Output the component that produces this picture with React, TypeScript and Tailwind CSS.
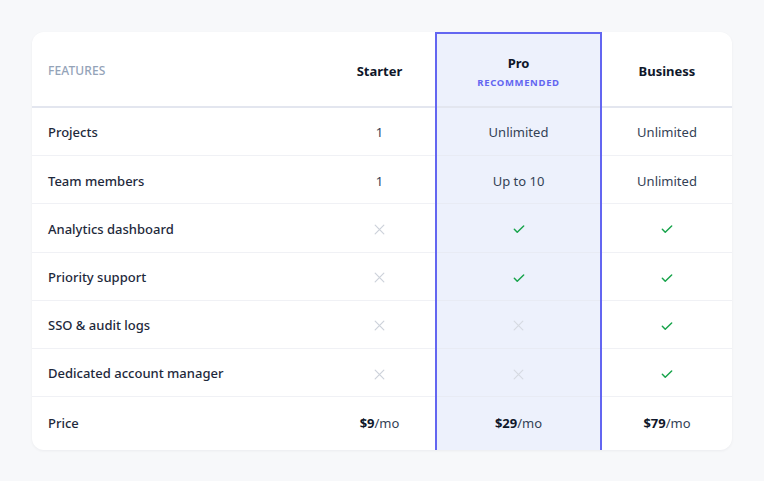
import React from "react";

const Check = () => (
  <svg width="14" height="14" viewBox="0 0 24 24" fill="none" stroke="#16a34a" strokeWidth="2.5" strokeLinecap="round" strokeLinejoin="round">
    <path d="M4 12.5l5 5L20 7" />
  </svg>
);

const Cross = ({ light = false }: { light?: boolean }) => (
  <svg width="13" height="13" viewBox="0 0 24 24" fill="none" stroke={light ? "#d6dae2" : "#cdd2da"} strokeWidth="2.2" strokeLinecap="round">
    <path d="M4 4l16 16M20 4L4 20" />
  </svg>
);

type Cell = React.ReactNode;

const features = [
  "Projects",
  "Team members",
  "Analytics dashboard",
  "Priority support",
  "SSO & audit logs",
  "Dedicated account manager",
];

const starter: Cell[] = ["1", "1", <Cross />, <Cross />, <Cross />, <Cross />];
const pro: Cell[] = ["Unlimited", "Up to 10", <Check />, <Check />, <Cross light />, <Cross light />];
const business: Cell[] = ["Unlimited", "Unlimited", <Check />, <Check />, <Check />, <Check />];

const Price = ({ v }: { v: string }) => (
  <span className="text-[13px] text-[#334155]">
    <span className="font-bold text-[#0f172a]">{v}</span>/mo
  </span>
);

function ValueColumn({ header, cells, price }: { header: React.ReactNode; cells: Cell[]; price: string }) {
  return (
    <div className="flex flex-col">
      <div className="h-[76px] pt-[5px] border-b-2 border-[#e3e6ef] flex items-center justify-center">{header}</div>
      {cells.map((c, i) => (
        <div key={i} className="h-[48.2px] pt-[3px] border-b border-[#f0f1f5] flex items-center justify-center text-[13px] text-[#334155]">
          {c}
        </div>
      ))}
      <div className="flex-1 flex items-center justify-center">
        <Price v={price} />
      </div>
    </div>
  );
}

export default function App() {
  return (
    <div className="min-h-[481px] w-full bg-[#f7f8fa] pt-[32px] pl-[32px]" style={{ fontFamily: "'Noto Sans', Inter, sans-serif" }}>
      <div className="w-[700px] h-[418px] bg-white rounded-xl overflow-hidden shadow-[0_1px_3px_rgba(15,23,42,0.05)] grid grid-cols-[292px_111px_167px_130px]">
        <div className="flex flex-col">
          <div className="h-[76px] pt-[3px] border-b-2 border-[#e3e6ef] flex items-center pl-4">
            <span className="text-[12px] font-medium uppercase tracking-[0.01em] text-[#94a3b8]">Features</span>
          </div>
          {features.map((f) => (
            <div key={f} className="h-[48.2px] pt-[3px] border-b border-[#f0f1f5] flex items-center pl-4 text-[13px] font-medium text-[#1e293b]">
              {f}
            </div>
          ))}
          <div className="flex-1 flex items-center pl-4 text-[13px] font-medium text-[#1e293b]">Price</div>
        </div>

        <ValueColumn
          header={<span className="text-[13px] font-bold text-[#0f172a]">Starter</span>}
          cells={starter}
          price="$9"
        />

        <div className="flex flex-col bg-[#edf1fc] border-x-2 border-t-2 border-[#6366f1]">
          <div className="h-[74px] pt-[2px] border-b-2 border-[#e3e6ef] flex flex-col items-center justify-center gap-[4px]">
            <span className="text-[13px] font-bold text-[#0f172a] leading-[18px]">Pro</span>
            <span className="text-[9.5px] font-bold tracking-[0.07em] text-[#6366f1] leading-[13px]">RECOMMENDED</span>
          </div>
          {pro.map((c, i) => (
            <div key={i} className="h-[48.2px] pt-[3px] border-b border-[#e8ebf4] flex items-center justify-center text-[13px] text-[#334155]">
              {c}
            </div>
          ))}
          <div className="flex-1 flex items-center justify-center">
            <Price v="$29" />
          </div>
        </div>

        <ValueColumn
          header={<span className="text-[13px] font-bold text-[#0f172a]">Business</span>}
          cells={business}
          price="$79"
        />
      </div>
    </div>
  );
}
